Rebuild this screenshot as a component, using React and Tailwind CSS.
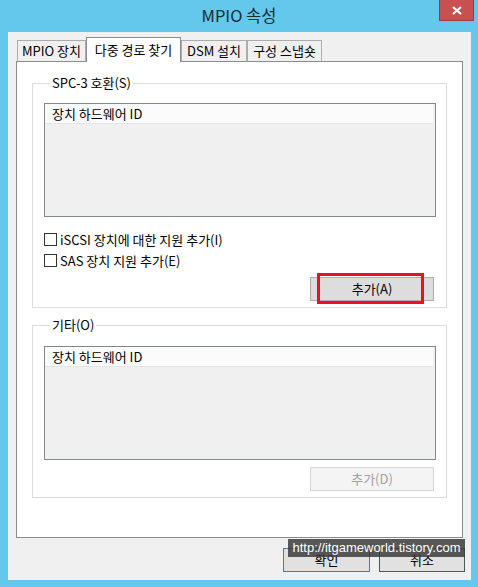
import React from "react";

const font = { fontFamily: '"Noto Sans CJK KR", "Noto Sans", sans-serif' };

function Tab({ label, active, width }) {
  if (active) {
    return (
      <div
        className="h-[25px] bg-white border border-b-0 border-[#898c95] flex items-start justify-center pt-[2px] text-[13px] text-black relative z-10"
        style={{ width }}
      >
        {label}
      </div>
    );
  }
  return (
    <div
      className="h-[22px] bg-[#f0f0f0] border border-[#acacac] border-b-[#898c95] flex items-center justify-center text-[13px] text-black"
      style={{ width }}
    >
      {label}
    </div>
  );
}

function ListBox() {
  return (
    <div className="h-[114px] border border-[#828790] bg-[#f0f0f0] pr-[2px]">
      <div className="h-[20px] bg-[#fbfbfb] border-b border-[#e5e5e5] flex items-center pl-[7px] text-[13px] text-black">
        장치 하드웨어 ID
      </div>
    </div>
  );
}

function Check({ label }) {
  return (
    <div className="h-[21px] flex items-center gap-[3px] text-[13px] text-black">
      <div className="w-[13px] h-[13px] border border-[#333] bg-white" />
      <span>{label}</span>
    </div>
  );
}

export default function App() {
  return (
    <div className="w-[478px] h-[587px] bg-[#63c8ec] flex flex-col" style={font}>
      <div className="h-[32px] relative flex items-center justify-center">
        <span className="text-[16.5px] text-[#1c2a30] pb-[2px]">MPIO 속성</span>
        <div className="absolute right-[4px] top-0 w-[35px] h-[21px] bg-[#c75050] border border-[#a03a3a] border-t-0 flex items-center justify-center">
          <svg width="10" height="9" viewBox="0 0 10 9">
            <path d="M1 1 L9 8 M9 1 L1 8" stroke="#fff" strokeWidth="2.2" />
          </svg>
        </div>
      </div>

      <div className="ml-[8px] w-[463px] h-[548px] bg-[#f0f0f0] flex flex-col">
        <div className="flex items-end pt-[5px] pl-[9px] -mb-px relative">
          <Tab label="MPIO 장치" width={69} />
          <Tab label="다중 경로 찾기" width={95} active />
          <Tab label="DSM 설치" width={66} />
          <Tab label="구성 스냅숏" width={75} />
        </div>

        <div className="ml-[8px] w-[447px] h-[477px] bg-white border border-[#898c95] flex flex-col px-[15px]">
          <fieldset className="mt-[13px] h-[233px] border border-[#dcdcdc] pl-[11px] pr-[10px] flex flex-col">
            <legend className="ml-[6px] px-[2px] text-[13px] leading-[16px] text-black">SPC-3 호환(S)</legend>
            <div className="mt-[12px]">
              <ListBox />
            </div>
            <div className="mt-[12px]">
              <Check label="iSCSI 장치에 대한 지원 추가(I)" />
              <Check label="SAS 장치 지원 추가(E)" />
            </div>
            <div className="mt-[6px] flex justify-end pr-[2px]">
              <div className="relative w-[124px] h-[24px] bg-[#dddddd] border border-[#adadad] flex items-center justify-center text-[13px] text-black">
                추가(A)
                <div className="absolute left-[6px] top-[-5px] w-[107px] h-[31px] border-[3px] border-[#e8141c]" />
              </div>
            </div>
          </fieldset>

          <fieldset className="mt-[9px] h-[181px] border border-[#dcdcdc] pl-[11px] pr-[10px] flex flex-col">
            <legend className="ml-[6px] px-[2px] text-[13px] leading-[16px] text-black">기타(O)</legend>
            <div className="mt-[13px]">
              <ListBox />
            </div>
            <div className="mt-[7px] flex justify-end pr-[2px]">
              <div className="w-[124px] h-[24px] bg-[#f4f4f4] border border-[#d5d5d5] flex items-center justify-center text-[13px] text-[#a0a0a0]">
                추가(D)
              </div>
            </div>
          </fieldset>
        </div>

        <div className="mt-[10px] ml-[275px] flex gap-[9px] relative">
          <div className="w-[87px] h-[24px] bg-[#e1e1e1] border border-[#3c7fb1] flex items-center justify-center text-[13px] text-black">
            확인
          </div>
          <div className="w-[86px] h-[24px] bg-[#e1e1e1] border border-[#555] flex items-center justify-center text-[13px] text-black">
            취소
          </div>
          <div
            className="absolute left-[5px] top-[-9px] w-[177px] h-[18px] bg-[#3c3c3c]/85 flex items-center justify-center text-[13px] text-white"
            style={{ fontFamily: '"Liberation Sans", sans-serif' }}
          >
            http://itgameworld.tistory.com
          </div>
        </div>
      </div>
    </div>
  );
}
